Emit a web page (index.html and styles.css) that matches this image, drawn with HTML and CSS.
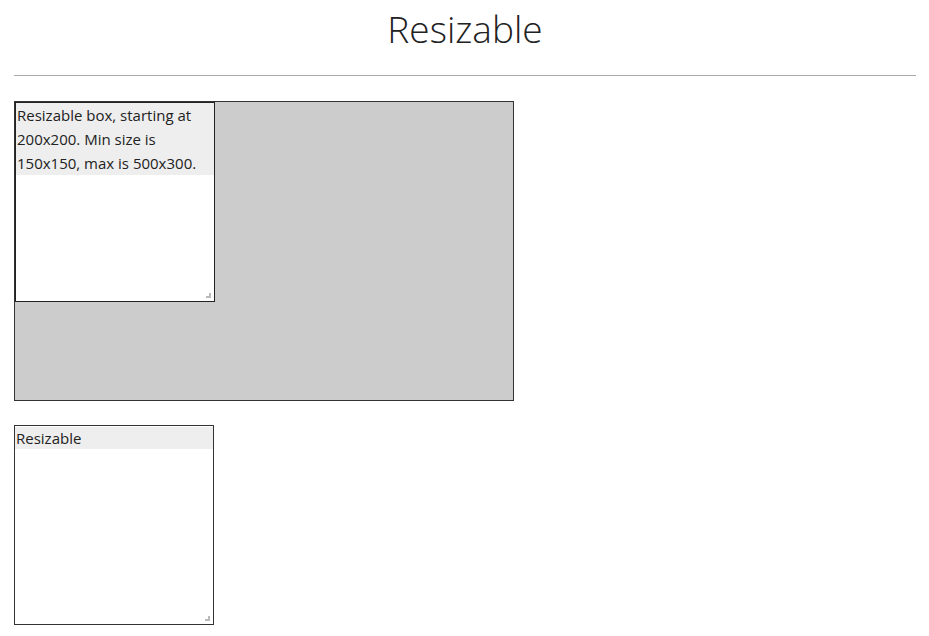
FILE: index.html
```html
<!DOCTYPE html>
<html>
<head>
<meta charset="utf-8">
<link rel="stylesheet" href="styles.css">
</head>
<body>
<div class="page">
  <h1 class="title">Resizable</h1>
  <hr class="rule">
  <div class="container">
    <div class="box box-inner">
      <div class="box-head box-head-long">Resizable box, starting at 200x200. Min size is 150x150, max is 500x300.</div>
      <span class="grip"></span>
    </div>
  </div>
  <div class="box box-plain">
    <div class="box-head">Resizable</div>
    <span class="grip"></span>
  </div>
</div>
</body>
</html>
```
FILE: styles.css
```css
html, body {
  margin: 0;
  padding: 0;
  background: #fff;
}
body {
  font-family: "Open Sans", "Noto Sans", sans-serif;
  color: #222;
}
.page {
  padding: 0 13px 0 14px;
}
.title {
  margin: 0;
  padding-top: 6px;
  height: 51px;
  text-align: center;
  font-weight: 300;
  font-size: 37px;
  line-height: 46px;
  color: #222;
}
.rule {
  margin: 18px 0 0 0;
  border: 0;
  border-top: 1px solid #aaa;
  height: 0;
}
.container {
  margin-top: 25px;
  width: 498px;
  height: 298px;
  border: 1px solid #333;
  background: #ccc;
}
.box {
  position: relative;
  box-sizing: border-box;
  width: 200px;
  height: 200px;
  border: 1px solid #222;
  background: #fff;
}
.box-plain {
  margin-top: 24px;
  border-color: #333;
}
.box-head {
  margin: 1px 0 0 0;
  padding-left: 1px;
  background: #eee;
  font-size: 15px;
  line-height: 22px;
}
.box-head-long {
  margin-top: 0;
  line-height: 24px;
}
.grip {
  position: absolute;
  right: 3px;
  bottom: 3px;
  width: 5px;
  height: 5px;
  border-right: 2px solid #bbb;
  border-bottom: 2px solid #bbb;
  box-sizing: border-box;
}
```
